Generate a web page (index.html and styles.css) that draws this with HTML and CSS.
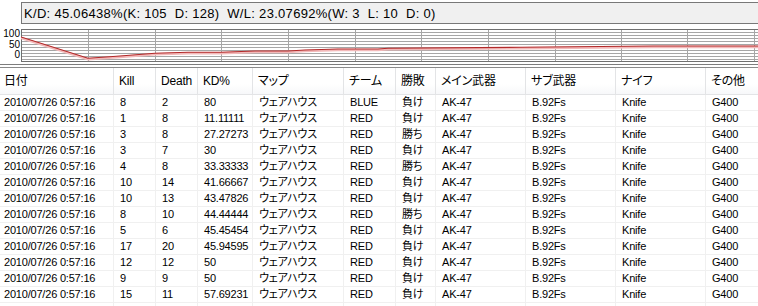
FILE: index.html
```html
<!DOCTYPE html>
<html lang="ja">
<head>
<meta charset="utf-8">
<title>Stats</title>
<link rel="stylesheet" href="styles.css">
</head>
<body>
<div class="summary">K/D: 45.06438%(K: 105  D: 128)  W/L: 23.07692%(W: 3  L: 10  D: 0)</div>
<div class="chart">
  <div class="axis">
    <span class="tick t100">100</span>
    <span class="tick t50">50</span>
    <span class="tick t0">0</span>
  </div>
  <svg class="plot" width="737" height="33" viewBox="0 0 737 33">
    <g stroke="#a6a6a6" stroke-width="1">
      <line x1="0" y1="3.5" x2="737" y2="3.5"/>
      <line x1="0" y1="6.5" x2="737" y2="6.5"/>
      <line x1="0" y1="9.5" x2="737" y2="9.5"/>
      <line x1="0" y1="12.5" x2="737" y2="12.5"/>
      <line x1="0" y1="15.5" x2="737" y2="15.5"/>
      <line x1="0" y1="18.5" x2="737" y2="18.5"/>
      <line x1="0" y1="21.5" x2="737" y2="21.5"/>
      <line x1="0" y1="24.5" x2="737" y2="24.5"/>
      <line x1="0" y1="27.5" x2="737" y2="27.5"/>
      <line x1="0" y1="30.5" x2="737" y2="30.5"/>
      <line x1="67.5" y1="0" x2="67.5" y2="33"/>
      <line x1="134.5" y1="0" x2="134.5" y2="33"/>
      <line x1="200.5" y1="0" x2="200.5" y2="33"/>
      <line x1="267.5" y1="0" x2="267.5" y2="33"/>
      <line x1="334.5" y1="0" x2="334.5" y2="33"/>
      <line x1="400.5" y1="0" x2="400.5" y2="33"/>
      <line x1="467.5" y1="0" x2="467.5" y2="33"/>
      <line x1="534.5" y1="0" x2="534.5" y2="33"/>
      <line x1="600.5" y1="0" x2="600.5" y2="33"/>
      <line x1="666.5" y1="0" x2="666.5" y2="33"/>
      <line x1="733.5" y1="0" x2="733.5" y2="33"/>
    </g>
    <g stroke="#6f6f6f" stroke-width="1" fill="none">
      <line x1="0" y1="0.5" x2="737" y2="0.5"/>
      <line x1="0" y1="32.5" x2="737" y2="32.5"/>
      <line x1="0.5" y1="0" x2="0.5" y2="33"/>
    </g>
    <polyline fill="none" stroke="#f2b9b9" stroke-width="2.5" points="0,9 67,30.2 99,28 134,25.2 167,24.2 200,24.2 234,23 267,23 284,22 317,21 357,21 367,20.2 500,19.2 633,17.9 737,17.9"/>
    <polyline fill="none" stroke="#b22a2a" stroke-width="1.1" points="0,8 67,29.3 99,27 134,24.3 167,23.3 200,23.3 234,22 267,22 284,21 317,20 357,20 367,19.3 500,18.3 633,17 737,17"/>
  </svg>
</div>
<div class="divider"></div>
<div class="list">
  <div class="row head">
    <div class="cell first">日付</div><div class="cell">Kill</div><div class="cell">Death</div><div class="cell">KD%</div><div class="cell">マップ</div><div class="cell">チーム</div><div class="cell">勝敗</div><div class="cell">メイン武器</div><div class="cell">サブ武器</div><div class="cell">ナイフ</div><div class="cell">その他</div>
  </div>
  <div class="row"><div class="cell first">2010/07/26 0:57:16</div><div class="cell">8</div><div class="cell">2</div><div class="cell">80</div><div class="cell">ウェアハウス</div><div class="cell">BLUE</div><div class="cell">負け</div><div class="cell">AK-47</div><div class="cell">B.92Fs</div><div class="cell">Knife</div><div class="cell">G400</div></div>
  <div class="row"><div class="cell first">2010/07/26 0:57:16</div><div class="cell">1</div><div class="cell">8</div><div class="cell">11.11111</div><div class="cell">ウェアハウス</div><div class="cell">RED</div><div class="cell">負け</div><div class="cell">AK-47</div><div class="cell">B.92Fs</div><div class="cell">Knife</div><div class="cell">G400</div></div>
  <div class="row"><div class="cell first">2010/07/26 0:57:16</div><div class="cell">3</div><div class="cell">8</div><div class="cell">27.27273</div><div class="cell">ウェアハウス</div><div class="cell">RED</div><div class="cell">勝ち</div><div class="cell">AK-47</div><div class="cell">B.92Fs</div><div class="cell">Knife</div><div class="cell">G400</div></div>
  <div class="row"><div class="cell first">2010/07/26 0:57:16</div><div class="cell">3</div><div class="cell">7</div><div class="cell">30</div><div class="cell">ウェアハウス</div><div class="cell">RED</div><div class="cell">負け</div><div class="cell">AK-47</div><div class="cell">B.92Fs</div><div class="cell">Knife</div><div class="cell">G400</div></div>
  <div class="row"><div class="cell first">2010/07/26 0:57:16</div><div class="cell">4</div><div class="cell">8</div><div class="cell">33.33333</div><div class="cell">ウェアハウス</div><div class="cell">RED</div><div class="cell">勝ち</div><div class="cell">AK-47</div><div class="cell">B.92Fs</div><div class="cell">Knife</div><div class="cell">G400</div></div>
  <div class="row"><div class="cell first">2010/07/26 0:57:16</div><div class="cell">10</div><div class="cell">14</div><div class="cell">41.66667</div><div class="cell">ウェアハウス</div><div class="cell">RED</div><div class="cell">負け</div><div class="cell">AK-47</div><div class="cell">B.92Fs</div><div class="cell">Knife</div><div class="cell">G400</div></div>
  <div class="row"><div class="cell first">2010/07/26 0:57:16</div><div class="cell">10</div><div class="cell">13</div><div class="cell">43.47826</div><div class="cell">ウェアハウス</div><div class="cell">RED</div><div class="cell">負け</div><div class="cell">AK-47</div><div class="cell">B.92Fs</div><div class="cell">Knife</div><div class="cell">G400</div></div>
  <div class="row"><div class="cell first">2010/07/26 0:57:16</div><div class="cell">8</div><div class="cell">10</div><div class="cell">44.44444</div><div class="cell">ウェアハウス</div><div class="cell">RED</div><div class="cell">勝ち</div><div class="cell">AK-47</div><div class="cell">B.92Fs</div><div class="cell">Knife</div><div class="cell">G400</div></div>
  <div class="row"><div class="cell first">2010/07/26 0:57:16</div><div class="cell">5</div><div class="cell">6</div><div class="cell">45.45454</div><div class="cell">ウェアハウス</div><div class="cell">RED</div><div class="cell">負け</div><div class="cell">AK-47</div><div class="cell">B.92Fs</div><div class="cell">Knife</div><div class="cell">G400</div></div>
  <div class="row"><div class="cell first">2010/07/26 0:57:16</div><div class="cell">17</div><div class="cell">20</div><div class="cell">45.94595</div><div class="cell">ウェアハウス</div><div class="cell">RED</div><div class="cell">負け</div><div class="cell">AK-47</div><div class="cell">B.92Fs</div><div class="cell">Knife</div><div class="cell">G400</div></div>
  <div class="row"><div class="cell first">2010/07/26 0:57:16</div><div class="cell">12</div><div class="cell">12</div><div class="cell">50</div><div class="cell">ウェアハウス</div><div class="cell">RED</div><div class="cell">負け</div><div class="cell">AK-47</div><div class="cell">B.92Fs</div><div class="cell">Knife</div><div class="cell">G400</div></div>
  <div class="row"><div class="cell first">2010/07/26 0:57:16</div><div class="cell">9</div><div class="cell">9</div><div class="cell">50</div><div class="cell">ウェアハウス</div><div class="cell">RED</div><div class="cell">負け</div><div class="cell">AK-47</div><div class="cell">B.92Fs</div><div class="cell">Knife</div><div class="cell">G400</div></div>
  <div class="row"><div class="cell first">2010/07/26 0:57:16</div><div class="cell">15</div><div class="cell">11</div><div class="cell">57.69231</div><div class="cell">ウェアハウス</div><div class="cell">RED</div><div class="cell">負け</div><div class="cell">AK-47</div><div class="cell">B.92Fs</div><div class="cell">Knife</div><div class="cell">G400</div></div>
  <div class="row"><div class="cell first"></div><div class="cell"></div><div class="cell"></div><div class="cell"></div><div class="cell"></div><div class="cell"></div><div class="cell"></div><div class="cell"></div><div class="cell"></div><div class="cell"></div><div class="cell"></div></div>
</div>
</body>
</html>
```

FILE: styles.css
```css
html, body {
  margin: 0;
  padding: 0;
  background: #ffffff;
  overflow: hidden;
}

body {
  width: 758px;
  height: 306px;
  font-family: "Liberation Sans", "Noto Sans CJK JP", sans-serif;
  color: #000;
}

.summary {
  margin: 2px 0 0 21px;
  height: 20px;
  border: 1px solid #787878;
  border-right: none;
  background: #f0f0f0;
  padding-left: 2px;
  font-size: 13px;
  line-height: 21px;
  white-space: pre;
  letter-spacing: 0.3px;
}

.chart {
  display: flex;
  margin-top: 5px;
  height: 33px;
}

.axis {
  position: relative;
  width: 21px;
  flex: none;
  font-size: 10px;
  line-height: 10px;
}

.tick {
  position: absolute;
  right: 1px;
}

.t100 { top: 0px; }
.t50 { top: 11px; }
.t0 { top: 21px; }

.plot {
  display: block;
  flex: none;
}

.divider {
  margin-top: 2px;
  height: 1px;
  background: #7d7d7d;
}

.list {
  margin-top: 2px;
  border-top: 1px solid #8a8a8a;
  font-size: 11px;
  font-feature-settings: "palt";
  letter-spacing: -0.2px;
}

.row {
  display: grid;
  grid-template-columns: 113px 42px 42px 55px 91px 52px 40px 90px 90px 90px 53px;
  height: 16px;
}

.cell {
  box-sizing: border-box;
  height: 16px;
  line-height: 15px;
  padding-left: 6px;
  border-left: 1px solid #f0f0f0;
  border-bottom: 1px solid #f0f0f0;
  white-space: nowrap;
  overflow: hidden;
}

.cell.first {
  padding-left: 4px;
  border-left: none;
}

.row.head {
  height: 27px;
  background: linear-gradient(#ffffff, #ffffff 60%, #f6f7f9);
}

.row.head .cell {
  height: 27px;
  line-height: 27px;
  padding-left: 5px;
  border-left: 1px solid #e3e4e6;
  border-bottom: 1px solid #e3e4e6;
  font-size: 12px;
}

.row.head .cell.first {
  padding-left: 4px;
  border-left: none;
}
```
